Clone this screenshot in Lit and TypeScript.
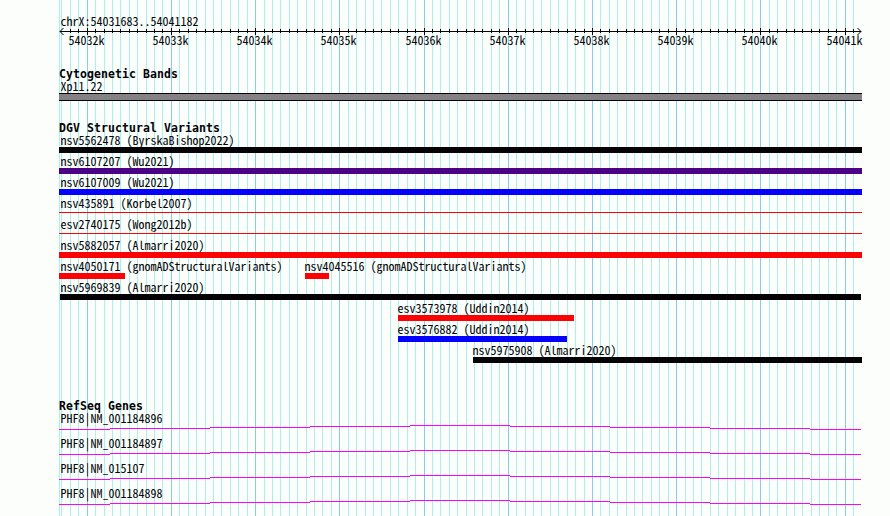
import { LitElement, html, svg, css } from 'lit';
import { customElement, property } from 'lit/decorators.js';

const REGION_START = 54031683;
const PX_PER_BASE = 800 / 9500;
const PANEL_LEFT = 59;

interface Feature {
  name: string;
  start: number;
  end: number;
  color: string;
  thin?: boolean;
}

// each entry is one lane, coordinates are in panel pixels
const VARIANTS: Feature[][] = [
  [{ name: 'nsv5562478 (ByrskaBishop2022)', start: 0, end: 803, color: '#040204' }],
  [{ name: 'nsv6107207 (Wu2021)', start: 0, end: 803, color: '#4c0284' }],
  [{ name: 'nsv6107009 (Wu2021)', start: 0, end: 803, color: '#0402fc' }],
  [{ name: 'nsv435891 (Korbel2007)', start: 0, end: 803, color: '#fc0204', thin: true }],
  [{ name: 'esv2740175 (Wong2012b)', start: 0, end: 803, color: '#fc0204', thin: true }],
  [{ name: 'nsv5882057 (Almarri2020)', start: 0, end: 803, color: '#fc0204' }],
  [
    { name: 'nsv4050171 (gnomADStructuralVariants)', start: 0, end: 66, color: '#fc0204' },
    { name: 'nsv4045516 (gnomADStructuralVariants)', start: 246, end: 270, color: '#fc0204' },
  ],
  [{ name: 'nsv5969839 (Almarri2020)', start: 1, end: 802, color: '#040204' }],
  [{ name: 'esv3573978 (Uddin2014)', start: 339, end: 515, color: '#fc0204' }],
  [{ name: 'esv3576882 (Uddin2014)', start: 339, end: 508, color: '#0402fc' }],
  [{ name: 'nsv5975908 (Almarri2020)', start: 414, end: 803, color: '#040204' }],
];

const GENES = ['NM_001184896', 'NM_001184897', 'NM_015107', 'NM_001184898'];

function ticks() {
  const result: { x: number; major: boolean; pos: number }[] = [];
  for (let pos = 54031700; pos <= 54041100; pos += 100) {
    const x = Math.round(60 + (pos - REGION_START) * PX_PER_BASE) - PANEL_LEFT;
    result.push({ x, major: pos % 1000 === 0, pos });
  }
  return result;
}

@customElement('track-grid')
export class TrackGrid extends LitElement {
  static override styles = css`
    :host,
    svg {
      display: block;
    }

    .minor {
      fill: #acf0ec;
    }

    .major {
      fill: #84ceec;
    }
  `;

  override render() {
    return html`
      <svg width="803" height="516" shape-rendering="crispEdges">
        <rect class="minor" x="0" y="0" width="1" height="516"></rect>
        ${ticks().map(
          (t) => svg`<rect class=${t.major ? 'major' : 'minor'} x=${t.x} y="0" width="1" height="516"></rect>`
        )}
      </svg>
    `;
  }
}

@customElement('track-ruler')
export class TrackRuler extends LitElement {
  static override styles = css`
    :host,
    svg {
      display: block;
    }

    svg {
      overflow: visible;
      fill: #040204;
    }

    text {
      font-family: 'Noto Sans CJK JP', 'DejaVu Sans Mono', monospace;
      font-feature-settings: 'hwid';
      font-size: 12px;
    }

    .arrow {
      fill: none;
      stroke: #040204;
    }
  `;

  override render() {
    return html`
      <svg width="803" height="24">
        <rect x="1" y="7" width="801" height="1"></rect>
        <path class="arrow" d="M4.5 4 L1 7.5 L4.5 11 M798.5 4 L802 7.5 L798.5 11"></path>
        ${ticks().map((t) =>
          t.major
            ? svg`<rect x=${t.x} y="4" width="1" height="7"></rect>
                <text x=${t.x - 18.6} y="21">${t.pos / 1000}k</text>`
            : t.x > 5
              ? svg`<rect x=${t.x} y="5" width="1" height="4"></rect>`
              : ''
        )}
      </svg>
    `;
  }
}

@customElement('feature-lane')
export class FeatureLane extends LitElement {
  static override styles = css`
    :host {
      display: grid;
      grid-template-columns: 803px;
      height: 21px;
    }

    .feature {
      grid-area: 1 / 1;
    }

    .name {
      height: 13px;
      line-height: 11px;
      padding-left: 1.4px;
      white-space: nowrap;
    }

    .tight {
      padding-left: 0.4px;
    }

    .inner {
      margin-left: -0.8px;
    }

    .bar {
      height: 6px;
    }

    .thin {
      height: 1px;
      margin-top: 2px;
    }
  `;

  @property({ attribute: false }) features: Feature[] = [];

  override render() {
    return this.features.map(
      (f) => html`
        <div class="feature" style="margin-left:${f.start}px">
          <div class="name ${f.start > 0 ? 'tight' : ''} ${f.start > 1 ? 'inner' : ''}">${f.name}</div>
          <div class="bar ${f.thin ? 'thin' : ''}" style="width:${f.end - f.start}px;background:${f.color}"></div>
        </div>
      `
    );
  }
}

@customElement('gene-lane')
export class GeneLane extends LitElement {
  static override styles = css`
    :host {
      display: block;
      height: 25px;
    }

    .name {
      height: 14px;
      line-height: 13px;
      padding-left: 1.4px;
    }

    svg {
      display: block;
      fill: #fc02fc;
    }
  `;

  @property() name = '';

  override render() {
    // intron drawn as a shallow hat, one pixel per step
    const edges = [0, 51, 151, 251, 351, 451, 551, 651, 751, 802];
    return html`
      <div class="name">PHF8|${this.name}</div>
      <svg width="802" height="5" shape-rendering="crispEdges">
        ${edges
          .slice(0, -1)
          .map((x, i) => svg`<rect x=${x} y=${Math.abs(4 - i)} width=${edges[i + 1] - x} height="1"></rect>`)}
      </svg>
    `;
  }
}

@customElement('app-root')
export class AppRoot extends LitElement {
  static override styles = css`
    :host {
      display: grid;
      width: 890px;
      height: 516px;
      box-sizing: border-box;
      padding-left: 59px;
      overflow: hidden;
      background: #fcfefc;
      color: #040204;
      font-family: 'Noto Sans CJK JP', 'DejaVu Sans Mono', monospace;
      font-feature-settings: 'hwid';
      font-size: 12px;
    }

    track-grid,
    .tracks {
      grid-area: 1 / 1;
    }

    .tracks {
      display: flex;
      flex-direction: column;
      width: 803px;
      height: 516px;
      padding-top: 15px;
      box-sizing: border-box;
    }

    .region {
      height: 9px;
      line-height: 11px;
      padding-left: 1.4px;
    }

    h2 {
      margin: 0;
      height: 12px;
      line-height: 12px;
      font-family: 'DejaVu Sans Mono', monospace;
      font-size: 11.5px;
      font-weight: bold;
      letter-spacing: 0.08px;
    }

    .bands {
      margin-top: 20px;
    }

    .variants {
      margin-top: 21px;
    }

    .genes {
      margin-top: 35px;
    }

    .genes h2 {
      height: 11px;
    }

    .band-name {
      height: 13px;
      line-height: 11px;
      padding-left: 1.4px;
    }

    .band {
      height: 6px;
      border: solid #040204;
      border-width: 1px 0;
      background: #848284;
    }
  `;

  override render() {
    return html`
      <track-grid></track-grid>
      <div class="tracks">
        <div class="region">chrX:54031683..54041182</div>
        <track-ruler></track-ruler>
        <section class="bands">
          <h2>Cytogenetic Bands</h2>
          <div class="band-name">Xp11.22</div>
          <div class="band"></div>
        </section>
        <section class="variants">
          <h2>DGV Structural Variants</h2>
          ${VARIANTS.map((lane) => html`<feature-lane .features=${lane}></feature-lane>`)}
        </section>
        <section class="genes">
          <h2>RefSeq Genes</h2>
          ${GENES.map((name) => html`<gene-lane name=${name}></gene-lane>`)}
        </section>
      </div>
    `;
  }
}
